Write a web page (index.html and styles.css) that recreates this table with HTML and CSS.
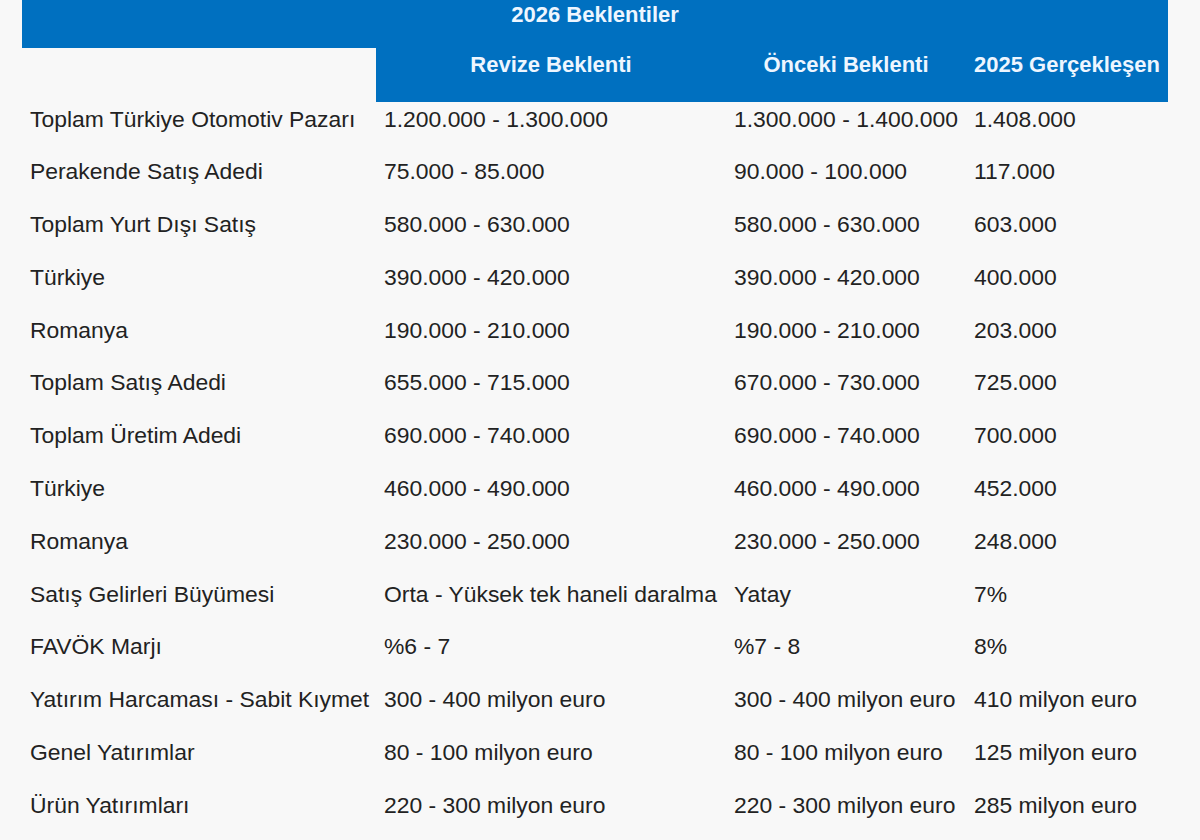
FILE: index.html
```html
<!DOCTYPE html>
<html lang="tr">
<head>
<meta charset="utf-8">
<title>2026 Beklentiler</title>
<link rel="stylesheet" href="styles.css">
</head>
<body>
<div class="page">
<table class="guide">
  <colgroup>
    <col class="c1"><col class="c2"><col class="c3"><col class="c4">
  </colgroup>
  <thead>
    <tr class="h1">
      <th colspan="4">2026 Beklentiler</th>
    </tr>
    <tr class="h2">
      <th class="blank"></th>
      <th>Revize Beklenti</th>
      <th>Önceki Beklenti</th>
      <th>2025 Gerçekleşen</th>
    </tr>
  </thead>
  <tbody>
    <tr><td>Toplam Türkiye Otomotiv Pazarı</td><td>1.200.000 - 1.300.000</td><td>1.300.000 - 1.400.000</td><td>1.408.000</td></tr>
    <tr><td>Perakende Satış Adedi</td><td>75.000 - 85.000</td><td>90.000 - 100.000</td><td>117.000</td></tr>
    <tr><td>Toplam Yurt Dışı Satış</td><td>580.000 - 630.000</td><td>580.000 - 630.000</td><td>603.000</td></tr>
    <tr><td>Türkiye</td><td>390.000 - 420.000</td><td>390.000 - 420.000</td><td>400.000</td></tr>
    <tr><td>Romanya</td><td>190.000 - 210.000</td><td>190.000 - 210.000</td><td>203.000</td></tr>
    <tr><td>Toplam Satış Adedi</td><td>655.000 - 715.000</td><td>670.000 - 730.000</td><td>725.000</td></tr>
    <tr><td>Toplam Üretim Adedi</td><td>690.000 - 740.000</td><td>690.000 - 740.000</td><td>700.000</td></tr>
    <tr><td>Türkiye</td><td>460.000 - 490.000</td><td>460.000 - 490.000</td><td>452.000</td></tr>
    <tr><td>Romanya</td><td>230.000 - 250.000</td><td>230.000 - 250.000</td><td>248.000</td></tr>
    <tr><td>Satış Gelirleri Büyümesi</td><td>Orta - Yüksek tek haneli daralma</td><td>Yatay</td><td>7%</td></tr>
    <tr><td>FAVÖK Marjı</td><td>%6 - 7</td><td>%7 - 8</td><td>8%</td></tr>
    <tr><td>Yatırım Harcaması - Sabit Kıymet</td><td>300 - 400 milyon euro</td><td>300 - 400 milyon euro</td><td>410 milyon euro</td></tr>
    <tr><td>Genel Yatırımlar</td><td>80 - 100 milyon euro</td><td>80 - 100 milyon euro</td><td>125 milyon euro</td></tr>
    <tr><td>Ürün Yatırımları</td><td>220 - 300 milyon euro</td><td>220 - 300 milyon euro</td><td>285 milyon euro</td></tr>
  </tbody>
</table>
</div>
</body>
</html>
```

FILE: styles.css
```css
html, body {
  margin: 0;
  padding: 0;
  background: #f8f8f8;
}

.page {
  padding: 0 0 0 22px;
  font-family: "Liberation Sans", Arial, sans-serif;
}

.guide {
  table-layout: fixed;
  border-collapse: collapse;
  border-spacing: 0;
  width: 1146px;
}

.c1 { width: 354px; }
.c2 { width: 350px; }
.c3 { width: 240px; }
.c4 { width: 202px; }

.guide th {
  background: #0070c0;
  color: #eef6ff;
  font-weight: bold;
  font-size: 22px;
  line-height: 26px;
  text-align: center;
  vertical-align: top;
  padding: 0;
  white-space: nowrap;
}

.h1 th {
  height: 48px;
  padding-top: 2px;
  box-sizing: border-box;
}

.h2 th {
  height: 54px;
  padding-top: 4px;
  box-sizing: border-box;
}

.h2 th.blank {
  background: transparent;
}

.guide td {
  font-size: 22.9px;
  line-height: 26px;
  color: #222;
  vertical-align: top;
  padding: 3.5px 0 0 8px;
  height: 52.8px;
  box-sizing: border-box;
  white-space: nowrap;
}
```
